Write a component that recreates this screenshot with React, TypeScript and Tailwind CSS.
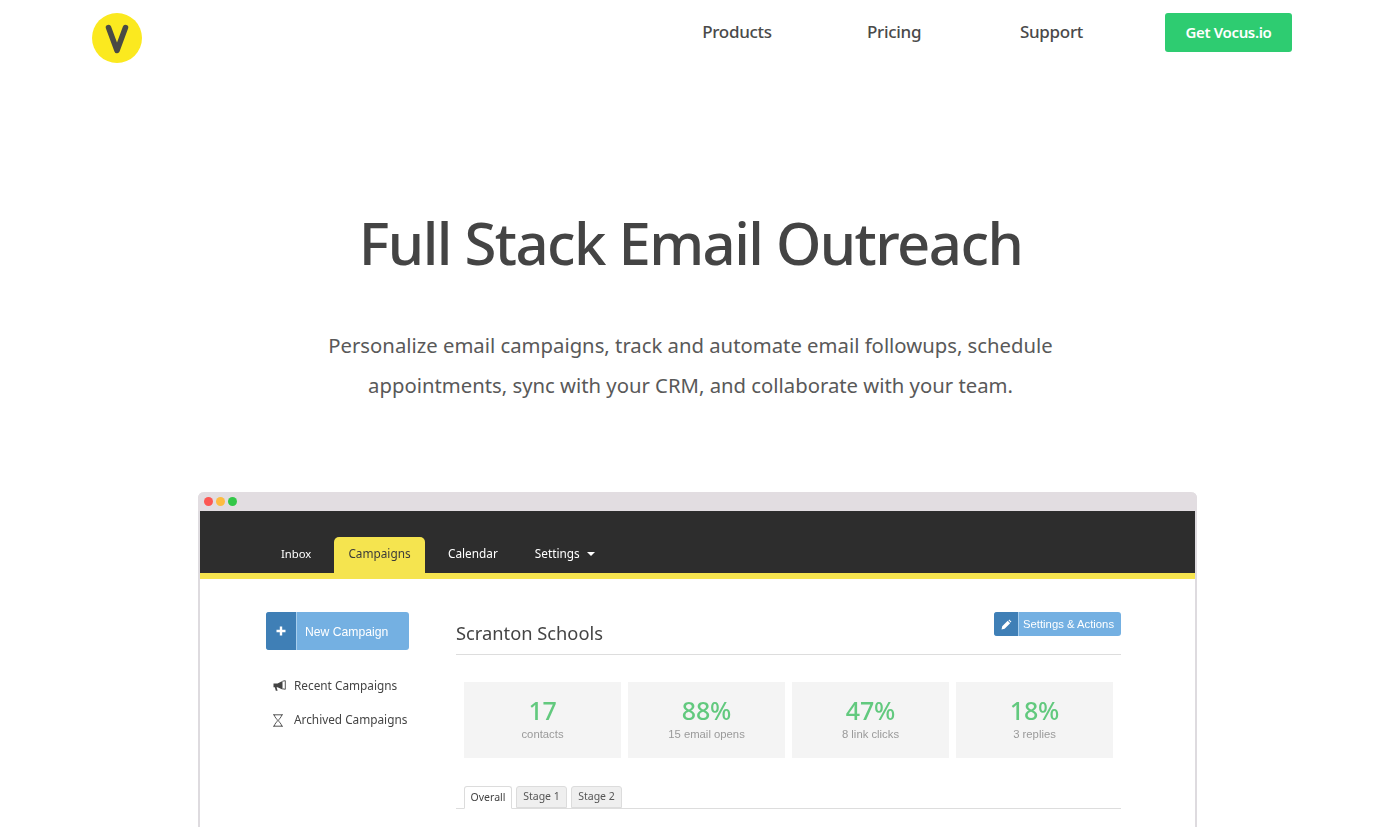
import React from "react";

const Stat = ({ n, l }: { n: string; l: string }) => (
  <div className="w-[157px] h-[76px] bg-[#f4f4f4] flex flex-col items-center pt-[13px]">
    <div className="text-[25px] leading-[30px] font-medium tracking-[-0.2px] text-[#62c97e]">{n}</div>
    <div className="text-[11.3px] leading-[17px] mt-[1px] text-[#9a9a9a]" style={{ fontFamily: '"Liberation Sans", sans-serif' }}>{l}</div>
  </div>
);

const Tab = ({ t, active }: { t: string; active?: boolean }) => (
  <div className={active
    ? "h-[23px] w-[48px] -mb-px flex items-center justify-center rounded-t-[3px] border border-[#dcdcdc] border-b-white bg-white text-[10.5px] text-[#444]"
    : "h-[22px] w-[51px] flex items-center justify-center rounded-t-[3px] border border-[#dcdcdc] bg-[#efefef] text-[10.5px] text-[#555]"}>{t}</div>
);

export default function App() {
  return (
    <div className="h-[827px] w-[1381px] overflow-hidden bg-white text-[#444]" style={{ fontFamily: '"Noto Sans", sans-serif' }}>
      <header className="flex h-[76px] items-start pl-[92px] pr-[89px] pt-[13px]">
        <svg width="50" height="50" viewBox="0 0 50 50" className="shrink-0">
          <circle cx="25" cy="25" r="25" fill="#fbe91f" />
          <path d="M16.500 14.500 L25 37.500 L33.500 14.500" fill="none" stroke="#4a4a45" strokeWidth="5.500" strokeLinecap="round" strokeLinejoin="round" />
        </svg>
        <nav className="ml-auto flex items-start text-[17px] font-medium text-[#4a4a4a] tracking-[-0.3px]">
          <span className="w-[70px] text-center leading-[37px]">Products</span>
          <span className="ml-[95px] w-[54px] text-center leading-[37px]">Pricing</span>
          <span className="ml-[98px] w-[65px] text-center leading-[37px]">Support</span>
          <span className="ml-[81px] flex h-[39px] w-[127px] items-center justify-center rounded-[3px] bg-[#2ecc71] text-[15px] font-semibold tracking-[-0.35px] text-white">Get Vocus.io</span>
        </nav>
      </header>

      <h1 className="mt-[127px] text-center text-[58px] leading-[80px] font-medium text-[#444] tracking-[-1.55px]">Full Stack Email Outreach</h1>

      <p className="mx-auto mt-[42px] w-[800px] text-center text-[20.3px] leading-[40px] text-[#595959]">
        Personalize email campaigns, track and automate email followups, schedule
        <br />
        appointments, sync with your CRM, and collaborate with your team.
      </p>

      <div className="ml-[198px] mt-[87px] h-[400px] w-[999px] rounded-t-[6px] border-x-2 border-[#dedbdf] bg-white blur-[0.3px]">
        <div className="-mx-[2px] flex h-[19px] items-center gap-[3px] rounded-t-[6px] bg-[#e2dde1] pl-[6px]">
          <span className="h-[9px] w-[9px] rounded-full bg-[#fc5753]" />
          <span className="h-[9px] w-[9px] rounded-full bg-[#fdbc40]" />
          <span className="h-[9px] w-[9px] rounded-full bg-[#33c748]" />
        </div>

        <div className="flex h-[68px] items-end border-b-[6px] border-[#f5e44f] bg-[#2d2d2d] pl-[66px] text-[11.800px] text-white">
          <span className="flex h-[36px] w-[68px] items-center pb-[2px] pl-[15px] text-[11.300px]">Inbox</span>
          <span className="flex h-[36px] w-[91px] items-center justify-center rounded-t-[5px] bg-[#f5e44f] pb-[2px] text-[#3a3a3a]">Campaigns</span>
          <span className="ml-[23px] flex h-[36px] items-center pb-[2px]">Calendar</span>
          <span className="ml-[37px] flex h-[36px] items-center pb-[2px]">
            Settings
            <span className="ml-[7px] h-0 w-0 border-x-[4px] border-t-[4px] border-x-transparent border-t-white" />
          </span>
        </div>

        <div className="flex pl-[66px] pt-[33px]">
          <div className="w-[143px] shrink-0">
            <div className="flex h-[38px] overflow-hidden rounded-[3px] bg-[#74b0e2] text-white">
              <div className="flex w-[31px] items-center justify-center border-r border-[#a9cfee] bg-[#3f7fb6] text-[16px] font-bold">
                <svg width="10" height="10" viewBox="0 0 10 10"><path d="M5 0.500v9M0.500 5h9" stroke="#fff" strokeWidth="2.400" /></svg>
              </div>
              <div className="pl-[8px] text-[12.200px] leading-[40px]" style={{ fontFamily: '"Liberation Sans", sans-serif' }}>New Campaign</div>
            </div>
            <div className="mt-[26px] flex items-center pl-[7px] text-[11.800px] text-[#444] h-[20px]">
              <svg width="13" height="12" viewBox="0 0 13 12" className="shrink-0">
                <path d="M0.500 3.500h4L9.500 1v8.500L4.500 7.200H3.600L4.600 10.800H2.800L1.800 7.200H0.500z" fill="#444" />
                <path d="M9.500 1.200L12.300 0.700V9.300L9.500 8.800" fill="none" stroke="#444" strokeWidth="0.900" />
              </svg>
              <span className="ml-[8px]">Recent Campaigns</span>
            </div>
            <div className="mt-[14px] flex items-center pl-[6px] text-[11.800px] text-[#444] h-[20px]">
              <svg width="12" height="13" viewBox="0 0 12 13" className="shrink-0">
                <path d="M1 .8h10M1 12.200h10M2.400.8c0 3 3 4 3 5.700s-3 2.700-3 5.700M9.600.8c0 3-3 4-3 5.700s3 2.700 3 5.700" fill="none" stroke="#555" strokeWidth="1" />
              </svg>
              <span className="ml-[10px]">Archived Campaigns</span>
            </div>
          </div>

          <div className="ml-[47px] w-[665px]">
            <div className="flex h-[43px] items-start justify-between border-b border-[#dddddd]">
              <div className="pt-[9px] text-[18.300px] leading-[24px] text-[#444]">Scranton Schools</div>
              <div className="flex h-[24px] w-[127px] overflow-hidden rounded-[3px] bg-[#74b0e2] text-white">
                <div className="flex w-[25px] items-center justify-center border-r border-[#a9cfee] bg-[#3f7fb6]">
                  <svg width="11" height="11" viewBox="0 0 10 10"><path d="M0.500 9.500l0.600-2.800 5-5 2.200 2.200-5 5zM6.800 1.200l0.700-0.700 2 2-0.700 0.700z" fill="#fff" /></svg>
                </div>
                <div className="pl-[4px] text-[11.300px] leading-[25px]" style={{ fontFamily: '"Liberation Sans", sans-serif' }}>Settings &amp; Actions</div>
              </div>
            </div>

            <div className="mt-[27px] flex gap-[7px] pl-[8px]">
              <Stat n="17" l="contacts" />
              <Stat n="88%" l="15 email opens" />
              <Stat n="47%" l="8 link clicks" />
              <Stat n="18%" l="3 replies" />
            </div>

            <div className="mt-[27px] flex h-[24px] items-end gap-[4px] border-b border-[#dddddd] pl-[8px]">
              <Tab t="Overall" active />
              <Tab t="Stage 1" />
              <Tab t="Stage 2" />
            </div>
          </div>
        </div>
      </div>
    </div>
  );
}
